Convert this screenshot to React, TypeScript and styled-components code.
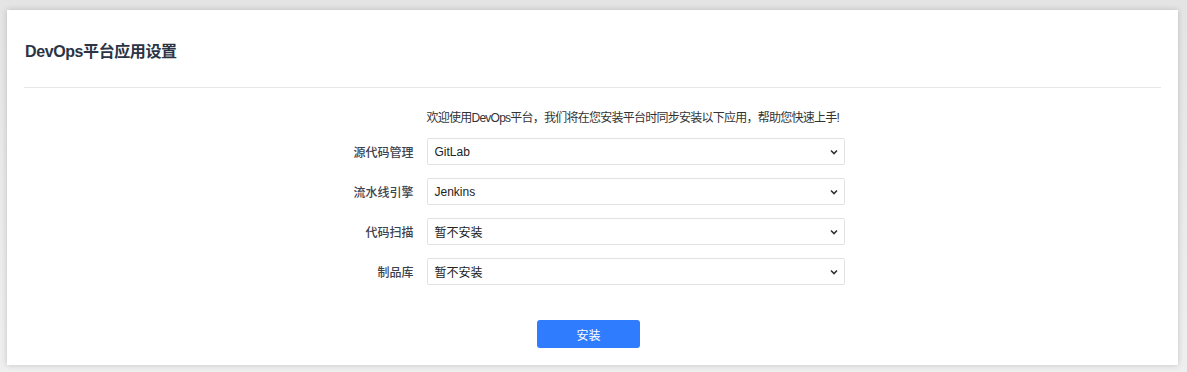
import React from "react";
import styled, { createGlobalStyle } from "styled-components";

const Global = createGlobalStyle`
  html, body { margin: 0; padding: 0; }
  body {
    background: #ececec;
    font-family: "Liberation Sans", Arial, "Noto Sans CJK SC", sans-serif;
  }
`;

const Page = styled.div`
  box-sizing: border-box;
  width: 1187px;
  height: 372px;
  padding: 10px 9px 7px 7px;
  background: linear-gradient(#e4e4e4, #efefef);
`;

const Card = styled.div`
  box-sizing: border-box;
  height: 355px;
  background: #fff;
  box-shadow: 0 0 6px rgba(0, 0, 0, 0.18);
  padding: 0 17px;
  display: flex;
  flex-direction: column;
`;

const Header = styled.div`
  padding: 32px 0 25px 1px;
  border-bottom: 1px solid #e6e6e6;
`;

const Title = styled.h1`
  margin: 0;
  font-size: 16px;
  line-height: 20px;
  font-weight: 700;
  letter-spacing: -0.4px;
  color: #2b3445;
`;

const Form = styled.div`
  width: 600px;
  margin: 21px auto 0;
  display: grid;
  grid-template-columns: 121px 418px;
  column-gap: 13px;
  row-gap: 13px;
  align-items: center;
`;

const Intro = styled.div`
  grid-column: 2;
  font-size: 12px;
  line-height: 18px;
  letter-spacing: -0.75px;
  color: #333;
  margin-bottom: -2px;
  white-space: nowrap;
`;

const Label = styled.div`
  text-align: right;
  font-size: 12px;
  font-weight: 500;
  color: #3c4350;
`;

const Select = styled.div`
  box-sizing: border-box;
  height: 27px;
  border: 1px solid #e2e2e2;
  border-radius: 2px;
  padding: 0 6px 0 7px;
  display: flex;
  align-items: center;
  justify-content: space-between;
  font-size: 12px;
  color: #222;
  background: #fff;
`;

const Footer = styled.div`
  display: flex;
  justify-content: center;
  padding: 35px 8px 0 0;
`;

const Button = styled.button`
  width: 103px;
  height: 28px;
  border: none;
  border-radius: 3px;
  background: #2f7cff;
  color: #fff;
  font-size: 12px;
  font-family: "Liberation Sans", "Noto Sans CJK SC", sans-serif;
  cursor: pointer;
`;

const Chevron = () => (
  <svg width="8" height="6" viewBox="0 0 8 6">
    <path d="M1 1.5 L4 4.5 L7 1.5" fill="none" stroke="#333" strokeWidth="1.6" />
  </svg>
);

const rows = [
  { label: "源代码管理", value: "GitLab" },
  { label: "流水线引擎", value: "Jenkins" },
  { label: "代码扫描", value: "暂不安装" },
  { label: "制品库", value: "暂不安装" },
];

export default function App() {
  return (
    <>
      <Global />
      <Page>
        <Card>
          <Header>
            <Title>DevOps平台应用设置</Title>
          </Header>
          <Form>
            <Intro>欢迎使用DevOps平台，我们将在您安装平台时同步安装以下应用，帮助您快速上手!</Intro>
            {rows.map((r) => (
              <React.Fragment key={r.label}>
                <Label>{r.label}</Label>
                <Select>
                  <span>{r.value}</span>
                  <Chevron />
                </Select>
              </React.Fragment>
            ))}
          </Form>
          <Footer>
            <Button>安装</Button>
          </Footer>
        </Card>
      </Page>
    </>
  );
}
